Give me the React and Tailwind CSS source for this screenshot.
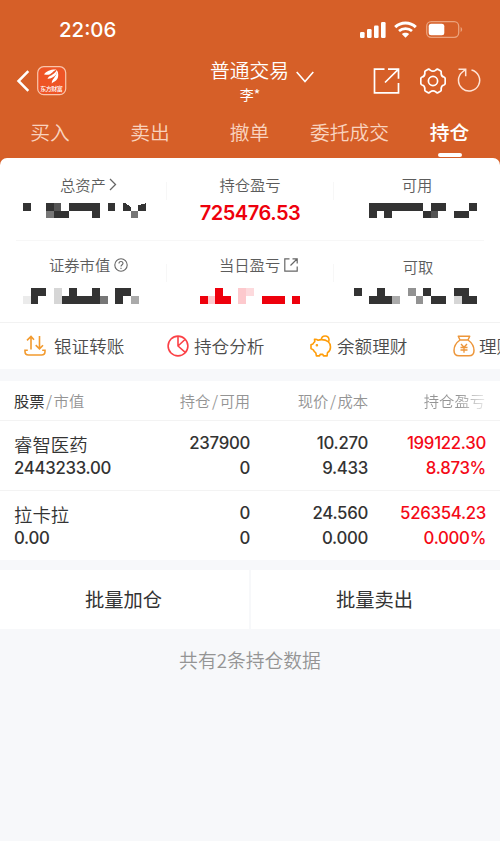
const TABS = [
  { label: '买入', width: 'w-[100px]' },
  { label: '卖出', width: 'w-[100px]' },
  { label: '撤单', width: 'w-[99px]' },
  { label: '委托成交', width: 'w-[101px]' },
  { label: '持仓', width: 'w-[99px]', active: true },
]

const HOLDINGS = [
  { name: '睿智医药', value: '2443233.00', held: '237900', usable: '0', price: '10.270', cost: '9.433', profit: '199122.30', rate: '8.873%' },
  { name: '拉卡拉', value: '0.00', held: '0', usable: '0', price: '24.560', cost: '0.000', profit: '526354.23', rate: '0.000%' },
]

const SHADES = {
  D: '#333333',
  G: '#555555',
  g: '#777777',
  m: '#929292',
  a: '#aaaaaa',
  L: '#d6d6d6',
  l: '#ebebeb',
  R: '#ee000c',
  P: '#fdc9cd',
  p: '#fddadd',
}

// Hidden amounts are drawn as two rows of blocks, one letter per block
function Mosaic({ rows, className = '', children }) {
  const cols = rows[0].length
  return (
    <svg
      className={`block shrink-0 ${className}`}
      width={cols * 7.7}
      height={15.6}
      viewBox={`0 0 ${cols} 2`}
      preserveAspectRatio="none"
      shapeRendering="crispEdges"
    >
      {rows.map((row, y) =>
        row.split('').map((c, x) =>
          SHADES[c] ? <rect key={`${x}-${y}`} x={x} y={y} width="1" height="1" fill={SHADES[c]} /> : null
        )
      )}
      {children}
    </svg>
  )
}

function StatusBar() {
  return (
    <div className="flex h-[60px] items-center justify-between pl-[59px] pr-[37px]">
      <span className="font-['Inter'] text-[20.400px] font-medium leading-none">22:06</span>
      <div className="flex items-center pb-[1px]">
        <svg width="26" height="17" viewBox="0 0 26 17" fill="#fff">
          <rect x="0" y="11" width="4.600" height="6" rx="1.200" />
          <rect x="7" y="8" width="4.600" height="9" rx="1.200" />
          <rect x="14" y="4.500" width="4.600" height="12.500" rx="1.200" />
          <rect x="21" y="1" width="4.600" height="16" rx="1.200" />
        </svg>
        <svg className="ml-[8px]" width="23" height="17" viewBox="0 0 23 17" fill="none" stroke="#fff">
          <path d="M1.200 6.200C7 .6 16 .6 21.800 6.200" strokeWidth="3" />
          <path d="M5 10.100c3.700-3.400 9.300-3.400 13 0" strokeWidth="2.700" />
          <path d="M11.500 16.700 7.800 13c2.100-1.800 5.300-1.800 7.400 0z" fill="#fff" stroke="none" />
        </svg>
        <svg className="ml-[9px]" width="37" height="17" viewBox="0 0 37 17" fill="none">
          <rect x=".7" y=".7" width="32" height="15.600" rx="4.500" stroke="#eba27c" strokeWidth="1.300" />
          <rect x="2.700" y="2.700" width="15.600" height="11.600" rx="2.500" fill="#fff" />
          <path d="M34.600 6c2 .8 2 4.200 0 5z" fill="#eba27c" />
        </svg>
      </div>
    </div>
  )
}

function AppLogo() {
  return (
    <svg className="ml-[7px]" width="30" height="30" viewBox="0 0 30 30">
      <rect x=".7" y=".7" width="28" height="28" rx="6" fill="#ee5425" stroke="#f9c6ac" strokeWidth="1.200" />
      <path d="M7 8.500C9.500 4.500 15 3 19.500 3.500 15.500 5.300 14.500 8.300 11.500 8.800 9.800 9 8 8.300 7 8.500z" fill="#fff" />
      <path d="M10.500 12.800c1-3.800 5.500-2.300 9.500-9.100.8 5.500-3.800 7.300-5.800 8.300-1.500.8-2.500.6-3.700.8z" fill="#fff" />
      <path d="M14.800 17.500c-.2-5 4-5 5.600-13 1.800 5.500.6 9-2.400 10.700-1.400.8-2.200 1.200-3.200 2.300z" fill="#fff" />
      <text x="3.300" y="25" fontSize="6" fontWeight="500" textLength="22.500" fill="#fff" fontFamily="Noto Sans CJK SC, sans-serif">
        东方财富
      </text>
    </svg>
  )
}

function TitleBar() {
  return (
    <div className="grid h-[48px] grid-cols-[1fr_110px_1fr]">
      <div className="flex items-center pb-[7px] pl-[16px]">
        <svg width="14" height="22" viewBox="0 0 14 22" fill="none" stroke="#fff" strokeWidth="2.500">
          <path d="M12.300 1.200 2.500 11l9.800 9.800" />
        </svg>
        <AppLogo />
      </div>
      <div className="-mt-[1px] ml-[15px] w-[80px]">
        <div className="flex">
          <span className="whitespace-nowrap text-[19.800px] font-[350] leading-[22px]">普通交易</span>
          <svg className="ml-[7px] mt-[12px] shrink-0" width="18" height="12" viewBox="0 0 18 12" fill="none" stroke="#fff" strokeWidth="1.600">
            <path d="M.7 1 9 10.500 17.300 1" />
          </svg>
        </div>
        <div className="pt-[2px] text-center text-[14px] leading-[18px]">李*</div>
      </div>
      <div className="flex items-center justify-end pb-[6px] pr-[19px]">
        <svg width="27" height="26" viewBox="0 0 27 26" fill="none" stroke="#fff" strokeWidth="1.700">
          <path d="M11.500 1.200H1.500v23.600h24V15" />
          <path d="M15 1.200h10.500v9.500M25.500 1.200 12 14.500" />
        </svg>
        <svg className="ml-[20px]" width="26" height="26" viewBox="0 0 26 26" fill="none" stroke="#fff" strokeWidth="1.700" strokeLinejoin="round">
          <path d="M8.200 1.200Q9.300 1 10.200 2.100 13 4.300 15.800 2.100 16.700 1 17.800 1.200L20.800 3Q21.500 3.800 21.100 5.100 21.200 8.400 23.900 9 25.200 9.500 25.200 11V15Q25.200 16.500 23.900 17 21.200 17.600 21.100 20.900 21.500 22.200 20.800 23L17.800 24.800Q16.700 25 15.800 23.900 13 21.700 10.200 23.900 9.300 25 8.200 24.800L5.200 23Q4.500 22.200 4.900 20.900 4.800 17.600 2.100 17 .8 16.500.8 15V11Q.8 9.500 2.100 9 4.800 8.400 4.900 5.100 4.500 3.800 5.200 3z" />
          <circle cx="13" cy="13" r="4.600" />
        </svg>
        <svg className="mb-[2px] ml-[11px]" width="24" height="24" viewBox="0 0 24 24" fill="none" stroke="#ffe3d5" strokeWidth="1.500">
          <path d="M14.500 2A10.600 10.600 0 1 1 5.500 4L8.300 1.700" />
          <path d="M1.500 1.300h7.200v6.900" />
        </svg>
      </div>
    </div>
  )
}

function Tabs() {
  return (
    <nav className="flex h-[50px]">
      {TABS.map((tab) => (
        <div key={tab.label} className={`flex flex-col items-center pt-[10px] ${tab.width}`}>
          <span className={`whitespace-nowrap text-[19.800px] leading-[28px] ${tab.active ? 'font-medium text-white' : 'font-[350] text-[#f9d3bf]'}`}>
            {tab.label}
          </span>
          {tab.active && <span className="mt-[7px] h-[4px] w-[24px] rounded-full bg-white" />}
        </div>
      ))}
    </nav>
  )
}

function Label({ className = '', children }) {
  return (
    <div className={`flex h-[20px] items-center whitespace-nowrap text-[15.300px] font-[350] leading-[20px] text-[#5c5c5c] ${className}`}>
      {children}
    </div>
  )
}

function Divider({ className = '' }) {
  return <span className={`h-[18px] w-px shrink-0 bg-[#f7f7f7] ${className}`} />
}

function Summary() {
  return (
    <section className="rounded-t-[7px] bg-white">
      <div className="flex h-[82px] pt-[16px]">
        <div className="w-[166px]">
          <Label className="ml-[60px]">
            总资产
            <svg className="ml-[3px] mt-[1px]" width="8" height="13" viewBox="0 0 8 13" fill="none" stroke="#666" strokeWidth="1.300">
              <path d="m1 1 5.500 5.500L1 12" />
            </svg>
          </Label>
          <Mosaic className="ml-[23px] mt-[8.500px]" rows={['D..DG.DDDD.D....', '...gDD...D....g.']}>
            <path d="M13 0h.3L14 .5V1h-1zM15 .3 16 0v1h-1z" fill="#333" />
          </Mosaic>
        </div>
        <Divider className="mt-[8px]" />
        <div className="w-[166px] text-center">
          <Label className="justify-center">持仓盈亏</Label>
          <div className="mt-[5px] font-['Inter'] text-[20px] font-semibold leading-[28px] tracking-[-0.450px] text-[#ee000c]">725476.53</div>
        </div>
        <Divider className="mt-[8px]" />
        <div className="w-[166px]">
          <Label className="justify-center">可用</Label>
          <Mosaic className="ml-[35px] mt-[8.500px]" rows={['DDDDDDD.DD...D', 'D.D....DG..DD.']} />
        </div>
      </div>
      <div className="mx-[16px] h-px bg-[#f7f7f7]" />
      <div className="flex h-[81px] pt-[13px]">
        <div className="w-[166px]">
          <Label className="ml-[49px]">
            证券市值
            <svg className="ml-[4px] mt-[1px]" width="14" height="14" viewBox="0 0 14 14" fill="none" stroke="#666" strokeWidth="1.100">
              <circle cx="7" cy="7" r="6.200" />
              <path d="M5 5.500c0-2.700 4-2.700 4 0C9 6.800 7 6.800 7 8.500M7 9.800v1.200" />
            </svg>
          </Label>
          <Mosaic className="ml-[23px] mt-[14px]" rows={['.DD.L.D..D..DD.', 'lD..LDDDDDg.D.a']} />
        </div>
        <Divider className="mt-[10px]" />
        <div className="w-[166px]">
          <Label className="ml-[52px]">
            当日盈亏
            <svg className="ml-[4px] mt-[1px]" width="14" height="14" viewBox="0 0 14 14" fill="none" stroke="#666" strokeWidth="1.200">
              <path d="M5.500.8H.8v12.400h12.400V8.500M8.500.8h4.700v4.700M13 1 6.500 7.500" />
            </svg>
          </Label>
          <Mosaic className="ml-[33px] mt-[14px]" rows={['..R..Pp......', 'RPRR.P..RRR.R']} />
        </div>
        <Divider className="mt-[10px]" />
        <div className="w-[166px]">
          <Label className="justify-center pl-[2px] pt-[3px]">可取</Label>
          <Mosaic className="ml-[20px] mt-[14px]" rows={['D..D...m.D...DD.', '..DDDa..m.DD.LDD']} />
        </div>
      </div>
    </section>
  )
}

function TransferIcon() {
  return (
    <svg width="22" height="22" viewBox="0 0 22 22" fill="none" stroke="#f29a2e" strokeWidth="1.600">
      <path d="M1 14.500v2q0 3.500 3.500 3.500h13q3.500 0 3.500-3.500v-2M1 15.300h2.800M21 15.300h-2.800" />
      <path d="M7 14.500V2M3 5.300 7 1.500l3 3.200M15.500 1v12.500M11.700 10.200l3.800 3.600 3.500-3.600" />
    </svg>
  )
}

function PieIcon() {
  return (
    <svg width="22" height="22" viewBox="0 0 22 22" fill="none" stroke="#fb4146" strokeWidth="1.600">
      <circle cx="11" cy="11" r="9.900" />
      <path d="M11 1v10l7.500 6.700M11 11l7-6.500" />
    </svg>
  )
}

function PiggyIcon() {
  return (
    <svg width="22" height="22" viewBox="0 0 22 22" fill="none" stroke="#ff9d0a" strokeWidth="1.600" strokeLinejoin="round">
      <path d="M4.500 4.300c1.500-.2 2.700.2 3.600 1 1-.5 2.200-.7 3.400-.7 5.500 0 9 3 9 7.400 0 2.500-1.200 4.500-3 5.700l-.4 3.200h-3.600l-.7-1.500h-2.600l-.7 1.500H6.400l-.6-3c-1.200-.8-2-1.800-2.500-3L1 13.500v-3.700l1.900-.8c.5-1 1.100-1.700 1.900-2.300z" />
      <path d="M11.300 4.600C11.800 0 18.300-.2 19 4.400c.1 1.200-.1 2-.7 2.800" />
      <circle cx="6.900" cy="10.200" r=".5" fill="#ff9d0a" />
    </svg>
  )
}

function MoneyBagIcon() {
  return (
    <svg width="22" height="22" viewBox="0 0 22 22" fill="none" stroke="#ed963a" strokeWidth="1.500" strokeLinejoin="round">
      <path d="M7 5 5.300 1.200h11.400L15 5M6.500 5h9M7 5C3.500 7.500 1 11.500 1 15.500 1 19 2.800 20.800 6 20.800h10c3.200 0 5-1.800 5-5.300 0-4-2.500-8-6-10.500" />
      <path d="m8 9 3 3.300L14 9M7.500 12.500h7M7.500 15h7M11 12.300v5.500" strokeWidth="1.300" />
    </svg>
  )
}

function Shortcuts() {
  const text = 'whitespace-nowrap text-[17.600px] font-[350] leading-[24px] text-[#4c4c4c]'
  return (
    <section className="flex h-[47px] overflow-hidden border-t border-[#f2f2f2] bg-white pl-[24px]">
      <div className="flex w-[143px] shrink-0 items-center gap-[8px]"><TransferIcon /><span className={text}>银证转账</span></div>
      <div className="flex w-[143px] shrink-0 items-center gap-[5px]"><PieIcon /><span className={text}>持仓分析</span></div>
      <div className="flex w-[143px] shrink-0 items-center gap-[5px]"><PiggyIcon /><span className={text}>余额理财</span></div>
      <div className="flex w-[143px] shrink-0 items-center gap-[4px]"><MoneyBagIcon /><span className={text}>理财</span></div>
    </section>
  )
}

function Holdings() {
  const grid = 'grid grid-cols-[118px_118px_118px_118px] pl-[14px]'
  return (
    <section className="mt-[12px] bg-white">
      <div className={`${grid} h-[39px] items-center pb-[1px] text-right text-[15.300px] font-[350] text-[#949494]`}>
        <span className="text-left"><b className="font-normal text-[#333]">股票</b><i className="px-[1.500px] not-italic">/</i>市值</span>
        <span>持仓<i className="px-[1.500px] not-italic">/</i>可用</span>
        <span>现价<i className="px-[1.500px] not-italic">/</i>成本</span>
        <span className="-mr-px bg-linear-to-r from-[#949494] from-75% to-[#eee] bg-clip-text pr-[2px] text-transparent">持仓盈亏</span>
      </div>
      {HOLDINGS.map((h) => (
        <div
          key={h.name}
          className={`${grid} h-[70px] content-start border-t border-[#f3f3f3] pt-[10px] text-right font-['Inter','Noto_Sans_CJK_SC',sans-serif] text-[16.800px] font-medium leading-[24.500px] tracking-[-0.300px] text-[#333]`}
        >
          <span className="h-[24px] pt-[2px] text-left text-[18.400px] font-[350] tracking-normal">{h.name}</span>
          <span>{h.held}</span>
          <span>{h.price}</span>
          <span className="text-[#f40916]">{h.profit}</span>
          <span className="text-left">{h.value}</span>
          <span>{h.usable}</span>
          <span>{h.cost}</span>
          <span className="text-[#f40916]">{h.rate}</span>
        </div>
      ))}
    </section>
  )
}

export default function App() {
  return (
    <div className="flex h-[841px] w-[500px] flex-col overflow-hidden bg-[#f7f8fa] font-['Noto_Sans_CJK_SC',sans-serif]">
      <div className="bg-[#d65f28] text-white">
        <StatusBar />
        <TitleBar />
        <Tabs />
        <Summary />
      </div>
      <Shortcuts />
      <Holdings />
      <div className="mt-[10px] flex h-[59px] gap-[2px] text-[19.300px] text-[#333]">
        <button className="w-[249px] bg-white pr-[2px]">批量加仓</button>
        <button className="w-[249px] bg-white pr-[2px]">批量卖出</button>
      </div>
      <p className="mt-[17px] text-center text-[18.800px] font-[350] leading-[28px] text-[#949494]">共有2条持仓数据</p>
    </div>
  )
}
